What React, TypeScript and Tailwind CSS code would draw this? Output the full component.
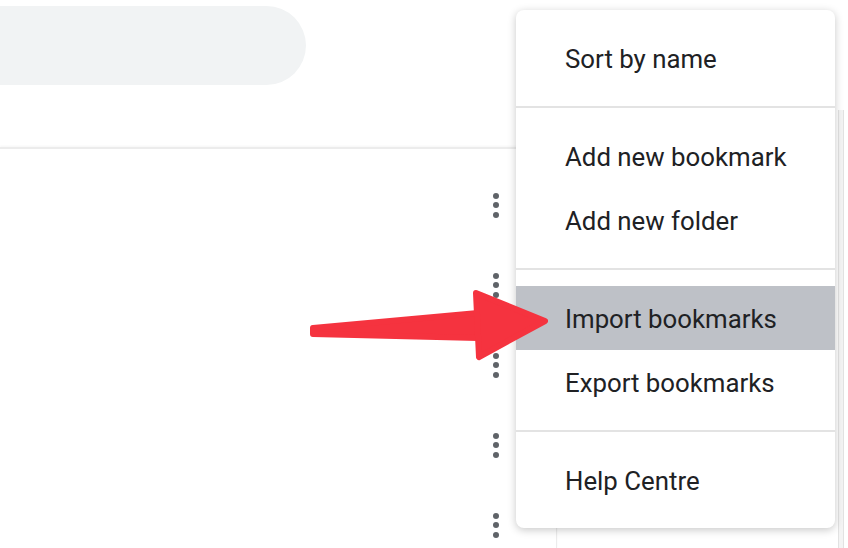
import React from "react"

const rows = [0, 1, 2, 3, 4]

function Dots() {
    return (
        <div className="flex flex-col items-center gap-[3.5px]">
            <span className="w-[6px] h-[6px] rounded-full bg-[#5f6368]" />
            <span className="w-[6px] h-[6px] rounded-full bg-[#5f6368]" />
            <span className="w-[6px] h-[6px] rounded-full bg-[#5f6368]" />
        </div>
    )
}

function MenuItem({ label, active }: { label: string; active?: boolean }) {
    return (
        <div className={"h-[64px] pl-[49px] pt-[2px] flex items-center text-[25.8px] text-[#202124] " + (active ? "bg-[#bec1c7]" : "")}>
            {label}
        </div>
    )
}

function Separator() {
    return <div className="my-[16px] h-[2px] bg-[#e3e3e3]" />
}

export default function App() {
    return (
        <div className="relative w-[848px] h-[548px] overflow-hidden bg-white" style={{ fontFamily: "Roboto, 'Liberation Sans', sans-serif" }}>
            <div className="h-[147px] pt-[6px]">
                <div className="-ml-[40px] w-[346px] h-[79px] rounded-full bg-[#f1f3f4]" />
            </div>
            <div className="flex h-[401px]">
                <div className="w-[557px] border-t-2 border-r border-[#ececec] shadow-[0_-1px_2px_rgba(0,0,0,0.04)] pt-[16px]">
                    {rows.map((r) => (
                        <div key={r} className="h-[80px] flex items-center justify-end pr-[57px]">
                            <Dots />
                        </div>
                    ))}
                </div>
                <div className="flex-1" />
            </div>
            <div className="absolute top-[110px] bottom-0 left-[838px] w-[6px] border-x border-[#e2e2e2] bg-[#f4f4f4]" />

            <div className="absolute left-[516px] top-[10px] w-[319px] py-[16px] rounded-[8px] bg-white shadow-[0_2px_8px_rgba(0,0,0,0.22)]">
                <MenuItem label="Sort by name" />
                <Separator />
                <MenuItem label="Add new bookmark" />
                <MenuItem label="Add new folder" />
                <Separator />
                <MenuItem label="Import bookmarks" active />
                <MenuItem label="Export bookmarks" />
                <Separator />
                <MenuItem label="Help Centre" />
            </div>

            <svg className="absolute inset-0 pointer-events-none" width="848" height="548" viewBox="0 0 848 548">
                <path
                    d="M313 328 L478 313 L478 338 L313 334 Z"
                    fill="#f5333f"
                    stroke="#f5333f"
                    strokeWidth="6"
                    strokeLinejoin="round"
                />
                <path
                    d="M476 293 L545 321 L479 357 Z"
                    fill="#f5333f"
                    stroke="#f5333f"
                    strokeWidth="6"
                    strokeLinejoin="round"
                />
            </svg>
        </div>
    )
}
